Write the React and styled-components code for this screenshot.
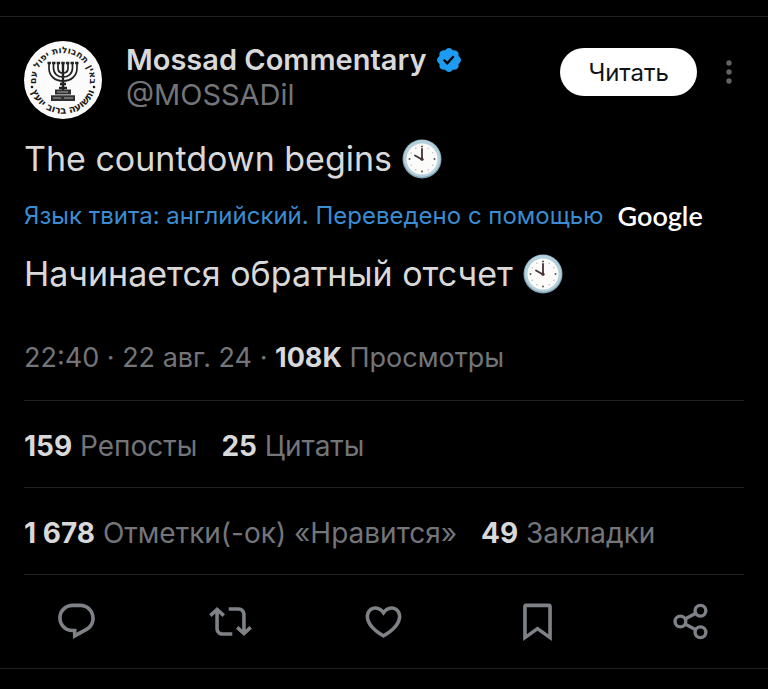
import React from 'react'
import styled, { createGlobalStyle } from 'styled-components'

const COLOR = {
  black: '#000000',
  white: '#ffffff',
  text: '#d9d9d9',
  muted: '#737579',
  icon: '#7e8287',
  link: '#3b8cd2',
  badge: '#1d9bf0',
  line: '#202224',
}

const GlobalStyle = createGlobalStyle`
  * {
    box-sizing: border-box;
  }
  body {
    margin: 0;
    background-color: ${COLOR.black};
    color: ${COLOR.text};
    font-family: Inter, 'Noto Sans', sans-serif;
  }
`

const Page = styled.main`
  padding: 16px 0;
`
const Tweet = styled.article`
  border-top: 1px solid ${COLOR.line};
  border-bottom: 1px solid ${COLOR.line};
`
const Content = styled.div`
  padding: 24px 24px 0;
`

const Header = styled.header`
  display: flex;
  align-items: flex-start;
  gap: 24px;
`
const AvatarSvg = styled.svg`
  width: 78px;
  height: 78px;
  flex: none;
`
const Author = styled.div`
  flex: 1;
  min-width: 0;
  padding-top: 1px;
`
const NameRow = styled.div`
  display: flex;
  align-items: center;
  gap: 8px;
  line-height: 36px;
`
const Name = styled.a`
  color: ${COLOR.text};
  font-size: 29px;
  font-weight: 600;
  text-decoration: none;
  white-space: nowrap;
`
const Handle = styled.a`
  display: block;
  color: ${COLOR.muted};
  font-size: 29px;
  line-height: 34px;
  text-decoration: none;
`
const BadgeSvg = styled.svg`
  width: 28px;
  height: 28px;
  flex: none;
  fill: ${COLOR.badge};
`
const HeaderActions = styled.div`
  display: flex;
  align-items: center;
  gap: 17px;
  padding-top: 7px;
`
const FollowButton = styled.button`
  height: 48px;
  padding: 0 28px;
  border: none;
  border-radius: 24px;
  background-color: ${COLOR.white};
  color: #0f1419;
  font-family: inherit;
  font-size: 24px;
  cursor: pointer;
`
const MoreButton = styled.button`
  display: flex;
  align-items: center;
  justify-content: center;
  width: 30px;
  height: 48px;
  padding: 0;
  border: none;
  background: none;
  fill: #5f6367;
  cursor: pointer;
`
const MoreSvg = styled.svg`
  width: 24px;
  height: 24px;
`

const Body = styled.p`
  display: flex;
  align-items: center;
  gap: 10px;
  margin: 0;
  padding-top: 19px;
  font-size: 34px;
  line-height: 42px;
`
const ClockSvg = styled.svg`
  width: 40px;
  height: 40px;
  flex: none;
`
const Translation = styled.a`
  display: flex;
  align-items: center;
  gap: 14px;
  padding: 20px 0 2px;
  color: ${COLOR.link};
  font-size: 24px;
  line-height: 32px;
  text-decoration: none;
`
const GoogleMark = styled.span`
  color: ${COLOR.white};
  font-family: Lato, sans-serif;
  font-size: 27px;
  font-weight: 600;
`

const Meta = styled.div`
  padding: 45px 0 24px;
  color: ${COLOR.muted};
  font-size: 27px;
  line-height: 36px;
`
const Strong = styled.strong`
  color: ${COLOR.text};
  font-weight: 700;
`
const Stats = styled.div`
  display: flex;
  gap: 24px;
  padding: 27px 0 23px;
  border-top: 1px solid ${COLOR.line};
`
const Stat = styled.a`
  color: ${COLOR.muted};
  font-size: 28px;
  line-height: 36px;
  text-decoration: none;
  white-space: nowrap;
`
const Divider = styled.hr`
  height: 1px;
  margin: 0;
  border: none;
  background-color: ${COLOR.line};
`

const Actions = styled.div`
  display: grid;
  grid-template-columns: repeat(5, 1fr);
  padding: 25px 0;
`
const ActionButton = styled.button`
  display: flex;
  justify-content: center;
  padding: 0;
  border: none;
  background: none;
  cursor: pointer;
`
const ActionSvg = styled.svg`
  width: 43px;
  height: 43px;
  fill: ${COLOR.icon};
`

const ShareShape = () => (
  <g fill='none' stroke={COLOR.icon} strokeWidth='1.9'>
    <circle cx='5.8' cy='12' r='3' />
    <circle cx='17' cy='6' r='3' />
    <circle cx='17' cy='18' r='3' />
    <path d='M8.4 10.6l6-3.2M8.4 13.4l6 3.2' />
  </g>
)

const actions = [
  {
    label: 'Ответить',
    shape: (
      <path d='M1.751 10c0-4.42 3.584-8 8.005-8h4.366c4.49 0 8.129 3.64 8.129 8.13 0 2.96-1.607 5.68-4.196 7.11l-8.054 4.46v-3.69h-.067c-4.49.1-8.183-3.51-8.183-8.01zm8.005-6c-3.317 0-6.005 2.69-6.005 6 0 3.37 2.77 6.08 6.138 6.01l.351-.01h1.761v2.3l5.087-2.81c1.951-1.08 3.163-3.13 3.163-5.36 0-3.39-2.744-6.13-6.129-6.13H9.756z' />
    ),
  },
  {
    label: 'Репост',
    shape: (
      <path d='M4.5 3.88l4.432 4.14-1.364 1.46L5.5 7.55V16c0 1.1.896 2 2 2H13v2H7.5c-2.209 0-4-1.79-4-4V7.55L1.432 9.48.068 8.02 4.5 3.88zM16.5 6H11V4h5.5c2.209 0 4 1.79 4 4v8.45l2.068-1.93 1.364 1.46-4.432 4.14-4.432-4.14 1.364-1.46 2.068 1.93V8c0-1.1-.896-2-2-2z' />
    ),
  },
  {
    label: 'Нравится',
    shape: (
      <path d='M16.697 5.5c-1.222-.06-2.679.51-3.89 2.16l-.805 1.09-.806-1.09C9.984 6.01 8.526 5.44 7.304 5.5c-1.243.07-2.349.78-2.91 1.91-.552 1.12-.633 2.78.479 4.82 1.074 1.97 3.257 4.27 7.129 6.61 3.87-2.34 6.052-4.64 7.126-6.61 1.111-2.04 1.03-3.7.477-4.82-.561-1.13-1.666-1.84-2.908-1.91zm4.187 7.69c-1.351 2.48-4.001 5.12-8.379 7.67l-.503.3-.504-.3c-4.379-2.55-7.029-5.19-8.382-7.67-1.36-2.5-1.41-4.86-.514-6.67.887-1.79 2.647-2.91 4.601-3.01 1.651-.09 3.368.56 4.798 2.01 1.429-1.45 3.146-2.1 4.796-2.01 1.954.1 3.714 1.22 4.601 3.01.896 1.81.846 4.17-.514 6.67z' />
    ),
  },
  {
    label: 'В закладки',
    shape: (
      <path d='M4 3.6C4 2.7 4.7 2 5.6 2h12.8c.9 0 1.6.7 1.6 1.6v19.34l-8-5.71-8 5.71V3.6zM6 4v15.06l6-4.29 6 4.29V4H6z' />
    ),
  },
  { label: 'Поделиться', shape: <ShareShape /> },
]

const Avatar = () => (
  <AvatarSvg viewBox='0 0 78 78' role='img' aria-label='Mossad Commentary'>
    <defs>
      <path id='ringTop' d='M15.6 52.5A27 27 0 1 1 62.4 52.5' />
      <path id='ringBottom' d='M6 36A33.2 33.2 0 1 0 72 36' />
    </defs>
    <circle cx='39' cy='39' r='39' fill='#fbfbfb' />
    <g
      fill='#1b1b1b'
      fontFamily="'DejaVu Sans', sans-serif"
      fontWeight='700'
      textAnchor='middle'
    >
      <text fontSize='9'>
        <textPath href='#ringTop' startOffset='50%'>
          באין תחבולות יפול עם
        </textPath>
      </text>
      <text fontSize='10'>
        <textPath href='#ringBottom' startOffset='50%'>
          ותשועה ברוב יועץ
        </textPath>
      </text>
    </g>
    <circle cx='8' cy='46' r='1.3' fill='#1b1b1b' />
    <circle cx='70' cy='46' r='1.3' fill='#1b1b1b' />
    {/* menorah */}
    <g fill='none' stroke='#222' strokeWidth='1.7'>
      <path d='M25 22v5c0 8 6 13 14 13s14-5 14-13v-5' />
      <path d='M29.5 22v5c0 5.5 4 9 9.5 9s9.5-3.5 9.5-9v-5' />
      <path d='M34 22v5c0 3 2 5 5 5s5-2 5-5v-5' />
      <path d='M23.5 22h31' strokeWidth='2.4' strokeDasharray='3.4 1.2' />
      <path d='M39 21v28' strokeWidth='2.4' />
      <path d='M36 43h6M35 47h8' strokeWidth='2.4' />
    </g>
    <path d='M31 48.5h16v5H31zM27 54.2h24v5.8H27z' fill='#303030' />
    <path d='M33 51h11M29 57h8m3 0h9' stroke='#aaa' strokeWidth='1' />
  </AvatarSvg>
)

const ClockIcon = () => (
  <ClockSvg viewBox='0 0 40 40' role='img' aria-label='10 часов'>
    <circle cx='20' cy='20' r='19.5' fill='#82a4b4' />
    <circle cx='20' cy='19.5' r='18.5' fill='#b4d0dc' />
    <circle cx='20' cy='20' r='15.5' fill='#fbfbfa' />
    <g fill='#5a5252'>
      <circle cx='20' cy='7.5' r='1' />
      <circle cx='32.5' cy='20' r='1' />
      <circle cx='20' cy='32.5' r='1' />
      <circle cx='7.5' cy='20' r='1' />
    </g>
    <g fill='#b4b4b4'>
      <circle cx='26.2' cy='9.2' r='.7' />
      <circle cx='30.8' cy='13.8' r='.7' />
      <circle cx='30.8' cy='26.2' r='.7' />
      <circle cx='26.2' cy='30.8' r='.7' />
      <circle cx='13.8' cy='30.8' r='.7' />
      <circle cx='9.2' cy='26.2' r='.7' />
      <circle cx='9.2' cy='13.8' r='.7' />
      <circle cx='13.8' cy='9.2' r='.7' />
    </g>
    <path
      d='M20 20.5V10M20 20.5l-7-4'
      stroke='#423233'
      strokeWidth='1.8'
      strokeLinecap='round'
    />
    <circle cx='20' cy='20.2' r='1.6' fill='#423233' />
  </ClockSvg>
)

const VerifiedBadge = () => (
  <BadgeSvg viewBox='0 0 22 22' role='img' aria-label='Подтверждено'>
    <path d='M20.396 11c-.018-.646-.215-1.275-.57-1.816-.354-.54-.852-.972-1.438-1.246.223-.607.27-1.264.14-1.897-.131-.634-.437-1.218-.882-1.687-.47-.445-1.053-.75-1.687-.882-.633-.13-1.29-.083-1.897.14-.273-.587-.704-1.086-1.245-1.44S11.647 1.62 11 1.604c-.646.017-1.273.213-1.813.568s-.969.854-1.24 1.44c-.608-.223-1.267-.272-1.902-.14-.635.13-1.22.436-1.69.882-.445.47-.749 1.055-.878 1.688-.13.633-.08 1.29.144 1.896-.587.274-1.087.705-1.443 1.245-.356.54-.555 1.17-.574 1.817.02.647.218 1.276.574 1.817.356.54.856.972 1.443 1.245-.224.606-.274 1.263-.144 1.896.13.634.433 1.218.877 1.688.47.443 1.054.747 1.687.878.633.132 1.29.084 1.897-.136.274.586.705 1.084 1.246 1.439.54.354 1.17.551 1.816.569.647-.016 1.276-.213 1.817-.567s.972-.854 1.245-1.44c.604.239 1.266.296 1.903.164.636-.132 1.22-.447 1.68-.907.46-.46.776-1.044.908-1.681s.075-1.299-.165-1.903c.586-.274 1.084-.705 1.439-1.246.354-.54.551-1.17.569-1.816zM9.662 14.85l-3.429-3.428 1.293-1.302 2.072 2.072 4.4-4.794 1.347 1.246z' />
  </BadgeSvg>
)

const App = () => {
  return (
    <Page>
      <GlobalStyle />
      <Tweet>
        <Content>
          <Header>
            <Avatar />
            <Author>
              <NameRow>
                <Name href='#profile'>Mossad Commentary</Name>
                <VerifiedBadge />
              </NameRow>
              <Handle href='#profile'>@MOSSADil</Handle>
            </Author>
            <HeaderActions>
              <FollowButton type='button'>Читать</FollowButton>
              <MoreButton type='button' aria-label='Ещё'>
                <MoreSvg viewBox='0 0 24 24'>
                  <circle cx='12' cy='3' r='2.7' />
                  <circle cx='12' cy='12' r='2.7' />
                  <circle cx='12' cy='21' r='2.7' />
                </MoreSvg>
              </MoreButton>
            </HeaderActions>
          </Header>

          <Body>
            The countdown begins
            <ClockIcon />
          </Body>
          <Translation href='#translation'>
            Язык твита: английский. Переведено с помощью
            <GoogleMark>Google</GoogleMark>
          </Translation>
          <Body>
            Начинается обратный отсчет
            <ClockIcon />
          </Body>

          <Meta>
            22:40 · 22 авг. 24 · <Strong>108K</Strong> Просмотры
          </Meta>
          <Stats>
            <Stat href='#reposts'>
              <Strong>159</Strong> Репосты
            </Stat>
            <Stat href='#quotes'>
              <Strong>25</Strong> Цитаты
            </Stat>
          </Stats>
          <Stats>
            <Stat href='#likes'>
              <Strong>1 678</Strong> Отметки(-ок) «Нравится»
            </Stat>
            <Stat href='#bookmarks'>
              <Strong>49</Strong> Закладки
            </Stat>
          </Stats>
          <Divider />
        </Content>

        <Actions>
          {actions.map(({ label, shape }) => (
            <ActionButton key={label} type='button' aria-label={label}>
              <ActionSvg viewBox='0 0 24 24' aria-hidden='true'>
                {shape}
              </ActionSvg>
            </ActionButton>
          ))}
        </Actions>
      </Tweet>
    </Page>
  )
}

export default App
